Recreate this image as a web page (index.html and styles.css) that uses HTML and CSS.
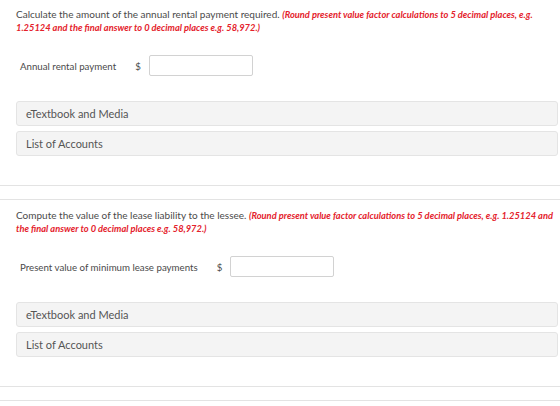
FILE: index.html
```html
<!DOCTYPE html>
<html lang="en">
<head>
  <meta charset="UTF-8">
  <meta name="viewport" content="width=device-width, initial-scale=1.0">
  <title>Lease Questions</title>
  <link rel="stylesheet" href="styles.css">
</head>
<body>

  <div class="part">
    <div class="part-body">
      <p class="question">Calculate the amount of the annual rental payment required. <em class="hint">(Round present value factor calculations to 5 decimal places, e.g. 1.25124 and the final answer to 0 decimal places e.g. 58,972.)</em></p>

      <div class="answer-row">
        <span class="answer-label">Annual rental payment</span>
        <span class="currency">$</span>
        <input class="answer-input" type="text">
      </div>

      <div class="resource">eTextbook and Media</div>
      <div class="resource">List of Accounts</div>
    </div>
    <div class="divider"></div>
  </div>

  <div class="part">
    <div class="part-body">
      <p class="question">Compute the value of the lease liability to the lessee. <em class="hint">(Round present value factor calculations to 5 decimal places, e.g. 1.25124 and the final answer to 0 decimal places e.g. 58,972.)</em></p>

      <div class="answer-row">
        <span class="answer-label">Present value of minimum lease payments</span>
        <span class="currency">$</span>
        <input class="answer-input" type="text">
      </div>

      <div class="resource">eTextbook and Media</div>
      <div class="resource">List of Accounts</div>
    </div>
    <div class="divider"></div>
  </div>

</body>
</html>
```

FILE: styles.css
```css
body {
  font-family: Lato, 'Noto Sans', sans-serif;
  background: #fff;
  color: #4a4a4a;
  margin: 0;
  padding: 0;
}

.part {
  height: 201px;
}

.part-body {
  padding: 8px 2px 0 16px;
}

.question {
  margin: 0;
  font-size: 10px;
  line-height: 13px;
  color: #4a4a4a;
}

.hint {
  color: #e4212b;
  font-size: 9.3px;
  font-weight: bold;
  font-style: italic;
}

.answer-row {
  display: flex;
  align-items: center;
  margin: 21px 0 25px 4px;
  font-size: 9.7px;
}

.answer-label {
  margin-right: 19px;
}

.currency {
  margin-right: 8px;
}

.answer-input {
  width: 104px;
  height: 21px;
  box-sizing: border-box;
  border: 1px solid #d2d2d2;
  border-radius: 2px;
  padding: 0 4px;
  margin: 0;
}

.resource {
  background: #f4f4f4;
  border: 1px solid #e4e4e4;
  border-radius: 3px;
  height: 25px;
  box-sizing: border-box;
  padding: 0 9px;
  display: flex;
  align-items: center;
  font-size: 11px;
  color: #555;
}

.resource + .resource {
  margin-top: 5px;
}

.divider {
  margin-top: 29px;
  height: 13px;
  border-top: 1px solid #e3e3e3;
  border-bottom: 1px solid #e3e3e3;
}
```
